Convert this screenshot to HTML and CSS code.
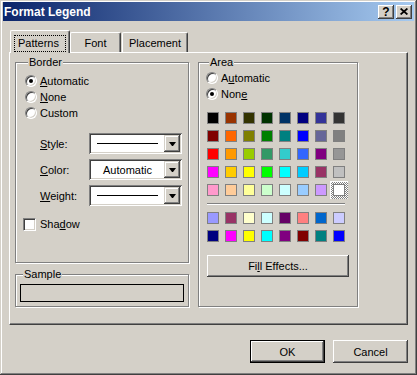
FILE: index.html
```html
<!DOCTYPE html>
<html>
<head>
    <title>Format Legend</title>
    <link rel="stylesheet" href="styles.css">
</head>
<body>
    <div class="window">
        <div class="titlebar">
            <span class="title">Format Legend</span>
            <div class="caption-buttons">
                <button class="cap-btn">?</button>
                <button class="cap-btn">
                    <svg width="8" height="7" viewBox="0 0 8 7"><path d="M0.6 0.5 L7.4 6.5 M7.4 0.5 L0.6 6.5" stroke="#000" stroke-width="1.7" fill="none"/></svg>
                </button>
            </div>
        </div>

        <div class="tabs">
            <div class="tab active"><span class="focus">Patterns</span></div>
            <div class="tab tab-font">Font</div>
            <div class="tab tab-placement">Placement</div>
        </div>

        <div class="panel">
            <div class="left-col">
                <fieldset class="group border-group">
                    <legend>Border</legend>
                    <div class="option"><span class="radio checked"></span><span><u>A</u>utomatic</span></div>
                    <div class="option"><span class="radio"></span><span><u>N</u>one</span></div>
                    <div class="option"><span class="radio"></span><span>Custom</span></div>

                    <div class="field first">
                        <span class="field-label"><u>S</u>tyle:</span>
                        <div class="combo"><div class="combo-value"><span class="line"></span></div><span class="combo-btn"><span class="arrow"></span></span></div>
                    </div>
                    <div class="field">
                        <span class="field-label"><u>C</u>olor:</span>
                        <div class="combo"><div class="combo-value">Automatic</div><span class="combo-btn"><span class="arrow"></span></span></div>
                    </div>
                    <div class="field">
                        <span class="field-label"><u>W</u>eight:</span>
                        <div class="combo"><div class="combo-value"><span class="line"></span></div><span class="combo-btn"><span class="arrow"></span></span></div>
                    </div>

                    <div class="check-row"><span class="checkbox"></span><span>Sha<u>d</u>ow</span></div>
                </fieldset>

                <fieldset class="group sample-group">
                    <legend>Sample</legend>
                    <div class="sample-box"></div>
                </fieldset>
            </div>

            <fieldset class="group area-group">
                <legend>Area</legend>
                <div class="option"><span class="radio"></span><span>A<u>u</u>tomatic</span></div>
                <div class="option"><span class="radio checked"></span><span>Non<u>e</u></span></div>

                <div class="palette" id="palette-main"></div>
                <div class="palette-sep"></div>
                <div class="palette" id="palette-extra"></div>

                <button class="btn fill-btn">Fi<u>l</u>l Effects...</button>
            </fieldset>
        </div>

        <div class="dialog-buttons">
            <button class="btn default">OK</button>
            <button class="btn">Cancel</button>
        </div>
    </div>

    <script>
        // standard 56 colour palette
        const mainColors = [
            '#000000', '#993300', '#333300', '#003300', '#003366', '#000080', '#333399', '#333333',
            '#800000', '#FF6600', '#808000', '#008000', '#008080', '#0000FF', '#666699', '#808080',
            '#FF0000', '#FF9900', '#99CC00', '#339966', '#33CCCC', '#3366FF', '#800080', '#969696',
            '#FF00FF', '#FFCC00', '#FFFF00', '#00FF00', '#00FFFF', '#00CCFF', '#993366', '#C0C0C0',
            '#FF99CC', '#FFCC99', '#FFFF99', '#CCFFCC', '#CCFFFF', '#99CCFF', '#CC99FF', '#FFFFFF'
        ];
        const extraColors = [
            '#9999FF', '#993366', '#FFFFCC', '#CCFFFF', '#660066', '#FF8080', '#0066CC', '#CCCCFF',
            '#000080', '#FF00FF', '#FFFF00', '#00FFFF', '#800080', '#800000', '#008080', '#0000FF'
        ];

        function fillPalette(id, colors, selected) {
            let palette = document.getElementById(id);
            colors.forEach((color, i) => {
                let swatch = document.createElement('span');
                swatch.classList.add('swatch');
                if (i === selected) swatch.classList.add('selected');
                let chip = document.createElement('i');
                chip.style.background = color;
                swatch.appendChild(chip);
                palette.appendChild(swatch);
            });
        }

        fillPalette('palette-main', mainColors, 39);
        fillPalette('palette-extra', extraColors, -1);
    </script>
</body>
</html>
```

FILE: styles.css
```css
/* classic dialog look */
body {
    margin: 0;
    font-family: "Liberation Sans", Arial, sans-serif;
    font-size: 11px;
    color: #000;
    background-color: #d4d0c8;
}
.window {
    width: 417px;
    height: 375px;
    box-sizing: border-box;
    padding: 2px 3px 3px 3px;
    background-color: #d4d0c8;
    box-shadow: inset -1px -1px #404040, inset 1px 1px #d4d0c8, inset -2px -2px #808080, inset 2px 2px #fff;
}

/* title bar */
.titlebar {
    height: 19px;
    display: flex;
    align-items: center;
    justify-content: space-between;
    padding: 0 2px 0 1px;
    background: linear-gradient(to right, #0a246a, #a6caf0);
}
.title {
    color: #fff;
    font-weight: bold;
    font-size: 12px;
}
.caption-buttons {
    display: flex;
    gap: 2px;
}
.cap-btn {
    width: 16px;
    height: 14px;
    box-sizing: border-box;
    padding: 0;
    border: none;
    display: flex;
    align-items: center;
    justify-content: center;
    background-color: #d4d0c8;
    box-shadow: inset -1px -1px #404040, inset 1px 1px #fff, inset -2px -2px #808080;
    font-family: "Liberation Sans", Arial, sans-serif;
    font-weight: bold;
    font-size: 12px;
    line-height: 1;
}

/* tabs */
.tabs {
    display: flex;
    align-items: flex-end;
    height: 22px;
    margin: 9px 0 0 7px;
}
.tab {
    height: 20px;
    box-sizing: border-box;
    display: flex;
    align-items: center;
    justify-content: center;
    border-top: 1px solid #fff;
    border-left: 1px solid #fff;
    border-right: 1px solid #404040;
    border-radius: 2px 2px 0 0;
    box-shadow: inset -1px 0 #808080;
    background-color: #d4d0c8;
}
.tab.active {
    position: relative;
    z-index: 1;
    width: 60px;
    height: 23px;
    margin-bottom: -1px;
    align-items: flex-start;
    padding-top: 4px;
}
.tab-font {
    width: 51px;
    padding-top: 1px;
}
.tab-placement {
    width: 66px;
    margin-left: 1px;
    padding-top: 1px;
}
.focus {
    border: 1px dotted #000;
    padding: 1px 6px 1px 3px;
    line-height: 13px;
}

/* tab page */
.panel {
    display: flex;
    align-items: flex-start;
    width: 399px;
    height: 273px;
    margin-left: 6px;
    box-sizing: border-box;
    padding: 3px 0 0 5px;
    border-top: 1px solid #fff;
    border-left: 1px solid #fff;
    border-right: 1px solid #404040;
    border-bottom: 1px solid #404040;
    box-shadow: inset -1px -1px #808080;
}
.left-col {
    display: flex;
    flex-direction: column;
}

/* group boxes */
.group {
    margin: 0;
    padding: 0;
    min-width: 0;
    box-sizing: border-box;
    border: 1px solid #808080;
    box-shadow: inset 1px 1px #fff, 1px 1px #fff;
}
.group legend {
    margin-left: 3px;
    padding: 0 1px;
    line-height: 13px;
    background-color: #d4d0c8;
}
.border-group {
    width: 174px;
    height: 207px;
    padding: 4px 0 0 9px;
}
.sample-group {
    width: 174px;
    margin-top: 5px;
    padding: 3px 4px 4px 4px;
}
.sample-box {
    height: 18px;
    box-sizing: border-box;
    border: 1px solid #000;
}
.area-group {
    width: 160px;
    height: 251px;
    margin-left: 9px;
    padding: 1px 0 0 7px;
}

/* radios and checkbox */
.option {
    display: flex;
    align-items: center;
    height: 16px;
}
.radio {
    position: relative;
    width: 12px;
    height: 12px;
    box-sizing: border-box;
    margin-right: 3px;
    border-radius: 50%;
    border: 1px solid;
    border-color: #808080 #fff #fff #808080;
    background-color: #fff;
    box-shadow: inset 1px 1px #404040, inset -1px -1px #d4d0c8;
}
.radio.checked::after {
    content: "";
    position: absolute;
    left: 3px;
    top: 3px;
    width: 4px;
    height: 4px;
    border-radius: 50%;
    background-color: #000;
}
.check-row {
    display: flex;
    align-items: center;
    height: 16px;
    margin: 10px 0 0 -2px;
}
.checkbox {
    width: 13px;
    height: 13px;
    box-sizing: border-box;
    margin-right: 4px;
    border: 1px solid;
    border-color: #808080 #fff #fff #808080;
    background-color: #fff;
    box-shadow: inset 1px 1px #404040, inset -1px -1px #d4d0c8;
}

/* style / color / weight rows */
.field {
    display: flex;
    align-items: center;
    height: 21px;
    margin-top: 5px;
    padding-left: 15px;
}
.field.first {
    margin-top: 12px;
}
.field-label {
    width: 49px;
}
.combo {
    display: flex;
    width: 93px;
    height: 21px;
    box-sizing: border-box;
    padding: 2px;
    background-color: #fff;
    box-shadow: inset 1px 1px #808080, inset -1px -1px #fff, inset 2px 2px #404040, inset -2px -2px #d4d0c8;
}
.combo-value {
    flex: 1;
    display: flex;
    align-items: center;
    justify-content: center;
}
.line {
    width: 61px;
    height: 1px;
    background-color: #000;
}
.combo-btn {
    width: 16px;
    display: flex;
    align-items: center;
    justify-content: center;
    background-color: #d4d0c8;
    box-shadow: inset -1px -1px #404040, inset 1px 1px #d4d0c8, inset -2px -2px #808080, inset 2px 2px #fff;
}
.arrow {
    width: 1px;
    height: 0;
    border-top: 4px solid #000;
    border-left: 3px solid transparent;
    border-right: 3px solid transparent;
}

/* colour palette */
.palette {
    display: grid;
    grid-template-columns: repeat(8, 18px);
    margin-left: -2px;
}
#palette-main {
    margin-top: 7px;
}
.swatch {
    width: 18px;
    height: 18px;
    box-sizing: border-box;
    padding: 3px;
}
.swatch i {
    display: block;
    width: 12px;
    height: 12px;
    box-sizing: border-box;
    border: 1px solid #808080;
}
.swatch.selected {
    background: repeating-conic-gradient(#808080 0 25%, #fff 0 50%) 0 0 / 2px 2px;
    box-shadow: inset 1px 1px #fff;
}
.palette-sep {
    width: 138px;
    height: 0;
    margin: 4px 0 4px 1px;
    border-top: 1px solid #808080;
    border-bottom: 1px solid #fff;
}

/* push buttons */
.btn {
    width: 75px;
    height: 23px;
    box-sizing: border-box;
    padding: 0;
    border: none;
    background-color: #d4d0c8;
    box-shadow: inset -1px -1px #404040, inset 1px 1px #fff, inset -2px -2px #808080, inset 2px 2px #d4d0c8;
    font-family: inherit;
    font-size: 11px;
    color: #000;
}
.btn.default {
    border: 1px solid #000;
}
.fill-btn {
    display: block;
    width: 142px;
    height: 22px;
    margin: 10px 0 0 1px;
}
.dialog-buttons {
    display: flex;
    justify-content: flex-end;
    gap: 8px;
    margin: 15px 6px 0 0;
}
```
